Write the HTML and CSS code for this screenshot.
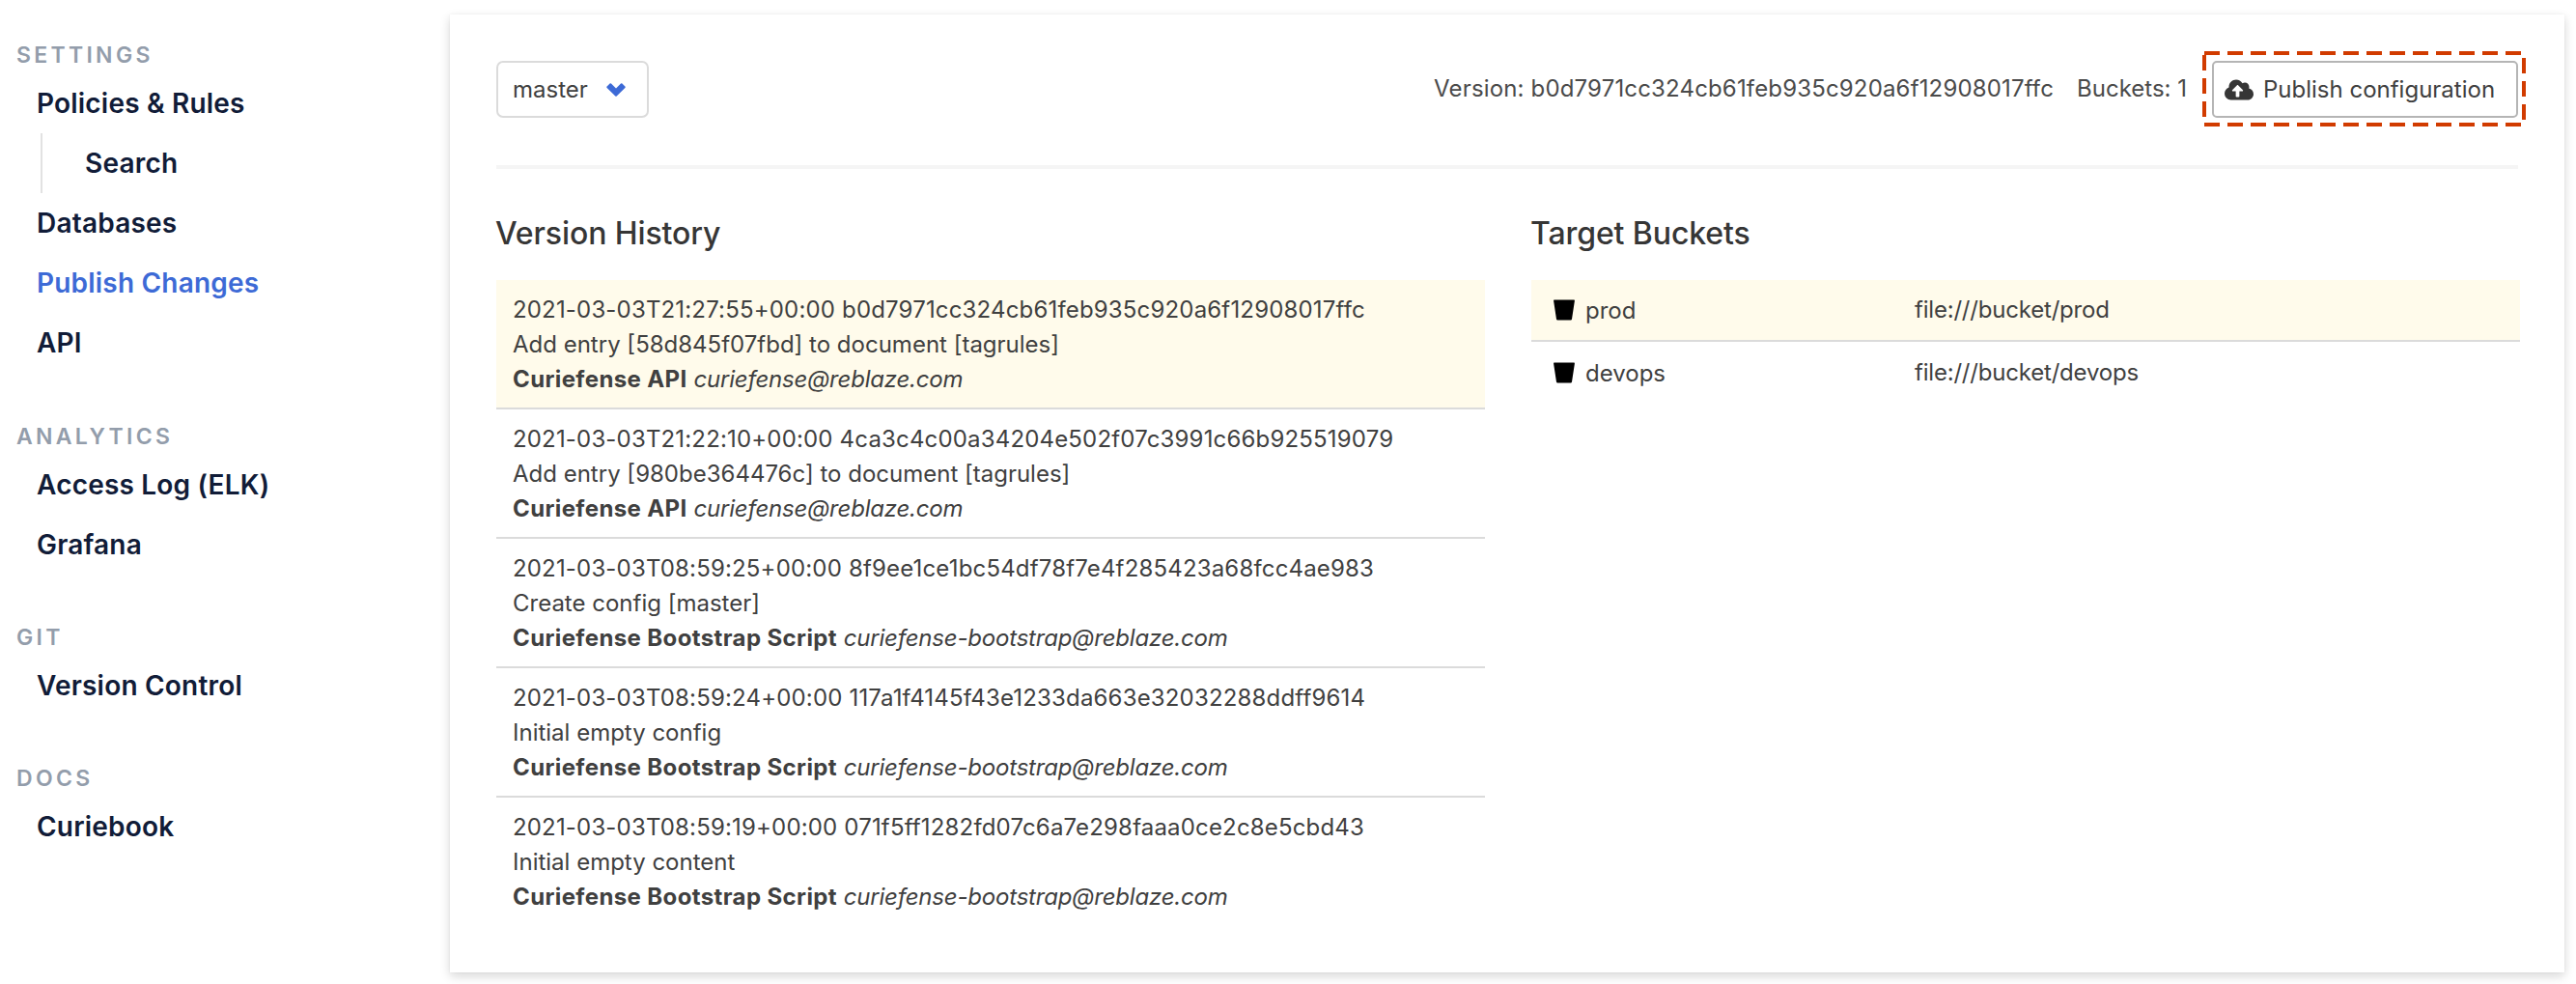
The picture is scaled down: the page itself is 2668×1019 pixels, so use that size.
FILE: index.html
```html
<!DOCTYPE html>
<html lang="en">
<head>
    <meta charset="UTF-8">
    <title>Publish Changes</title>
    <link rel="stylesheet" href="styles.css">
</head>
<body>

    <aside class="sidebar">
        <p class="menu-label">Settings</p>
        <ul class="menu-list">
            <li><a>Policies &amp; Rules</a></li>
            <li class="sub-item"><a>Search</a></li>
            <li><a>Databases</a></li>
            <li><a class="is-active">Publish Changes</a></li>
            <li><a>API</a></li>
        </ul>
        <p class="menu-label">Analytics</p>
        <ul class="menu-list">
            <li><a>Access Log (ELK)</a></li>
            <li><a>Grafana</a></li>
        </ul>
        <p class="menu-label">Git</p>
        <ul class="menu-list">
            <li><a>Version Control</a></li>
        </ul>
        <p class="menu-label">Docs</p>
        <ul class="menu-list">
            <li><a>Curiebook</a></li>
        </ul>
    </aside>

    <main class="card">
        <header class="toolbar">
            <div class="select-box">
                <span>master</span>
                <svg class="chevron" viewBox="0 0 20 14"><path d="M3.6.6a1 1 0 0 1 1.4 0L10 5.6l5-5a1 1 0 0 1 1.4 0l3 3a1 1 0 0 1 0 1.4l-8.7 8.4a1 1 0 0 1-1.4 0L.6 5a1 1 0 0 1 0-1.4z"/></svg>
            </div>
            <div class="toolbar-right">
                <span class="version">Version: b0d7971cc324cb61feb935c920a6f12908017ffc</span>
                <span class="buckets">Buckets: 1</span>
                <div class="publish-wrap">
                    <button class="publish-btn" type="button">
                        <svg class="cloud" viewBox="0 0 640 512"><path d="M537.6 226.6c4.1-10.7 6.4-22.4 6.4-34.6 0-53-43-96-96-96-19.7 0-38.1 6-53.3 16.2C367 64.2 315.3 32 256 32c-88.4 0-160 71.6-160 160 0 2.7.1 5.4.2 8.1C40.2 219.8 0 273.2 0 336c0 79.5 64.5 144 144 144h368c70.7 0 128-57.3 128-128 0-61.9-44-113.6-102.4-125.4zM393.4 288H328v112c0 8.8-7.2 16-16 16h-48c-8.8 0-16-7.2-16-16V288h-65.4c-14.3 0-21.4-17.2-11.3-27.3l105.4-105.4c6.2-6.2 16.4-6.2 22.6 0l105.4 105.4c10.1 10.1 2.9 27.3-11.3 27.3z"/></svg>
                        Publish configuration
                    </button>
                    <svg class="dash-frame" viewBox="0 0 335 78"><rect x="2" y="2" width="331" height="74"/></svg>
                </div>
            </div>
        </header>

        <div class="columns">
            <section>
                <h3>Version History</h3>
                <div class="commit is-current">
                    <div class="hash">2021-03-03T21:27:55+00:00 b0d7971cc324cb61feb935c920a6f12908017ffc</div>
                    <div>Add entry [58d845f07fbd] to document [tagrules]</div>
                    <div><strong>Curiefense API</strong> <em>curiefense@reblaze.com</em></div>
                </div>
                <div class="commit">
                    <div class="hash">2021-03-03T21:22:10+00:00 4ca3c4c00a34204e502f07c3991c66b925519079</div>
                    <div>Add entry [980be364476c] to document [tagrules]</div>
                    <div><strong>Curiefense API</strong> <em>curiefense@reblaze.com</em></div>
                </div>
                <div class="commit">
                    <div class="hash">2021-03-03T08:59:25+00:00 8f9ee1ce1bc54df78f7e4f285423a68fcc4ae983</div>
                    <div>Create config [master]</div>
                    <div><strong>Curiefense Bootstrap Script</strong> <em>curiefense-bootstrap@reblaze.com</em></div>
                </div>
                <div class="commit">
                    <div class="hash">2021-03-03T08:59:24+00:00 117a1f4145f43e1233da663e32032288ddff9614</div>
                    <div>Initial empty config</div>
                    <div><strong>Curiefense Bootstrap Script</strong> <em>curiefense-bootstrap@reblaze.com</em></div>
                </div>
                <div class="commit is-last">
                    <div class="hash">2021-03-03T08:59:19+00:00 071f5ff1282fd07c6a7e298faaa0ce2c8e5cbd43</div>
                    <div>Initial empty content</div>
                    <div><strong>Curiefense Bootstrap Script</strong> <em>curiefense-bootstrap@reblaze.com</em></div>
                </div>
            </section>

            <section>
                <h3>Target Buckets</h3>
                <div class="bucket is-current">
                    <div class="bucket-name">
                        <svg class="bucket-icon" viewBox="0 0 22 22"><path d="M1 0.5h20c.6 0 1 .5.9 1.1L19 20.6c-.1.6-.6.9-1.1.9H4.1c-.5 0-1-.3-1.1-.9L.1 1.6C0 1 .4.5 1 .5z"/></svg>
                        <span>prod</span>
                    </div>
                    <div class="bucket-url">file:///bucket/prod</div>
                </div>
                <div class="bucket">
                    <div class="bucket-name">
                        <svg class="bucket-icon" viewBox="0 0 22 22"><path d="M1 0.5h20c.6 0 1 .5.9 1.1L19 20.6c-.1.6-.6.9-1.1.9H4.1c-.5 0-1-.3-1.1-.9L.1 1.6C0 1 .4.5 1 .5z"/></svg>
                        <span>devops</span>
                    </div>
                    <div class="bucket-url">file:///bucket/devops</div>
                </div>
            </section>
        </div>
    </main>

</body>
</html>
```

FILE: styles.css
```css
* {
    box-sizing: border-box;
}
body {
    font-family: Inter, "Liberation Sans", sans-serif;
    font-size: 24px;
    color: #404040;
    background: #fff;
    margin: 0;
    min-height: 100vh;
    display: flex;
    align-items: flex-start;
}
.sidebar {
    width: 466px;
    flex-shrink: 0;
    padding-top: 39px;
}
.menu-label {
    margin: 0 0 1px 17px;
    height: 36px;
    line-height: 36px;
    font-size: 23px;
    font-weight: 600;
    letter-spacing: 3.3px;
    text-transform: uppercase;
    color: #939dab;
}
.menu-list {
    list-style: none;
    margin: 0 0 47px 0;
    padding: 0;
}
.menu-list:nth-of-type(1) {
    margin-bottom: 48px;
}
.menu-list li {
    height: 62px;
    line-height: 62px;
    padding-left: 38px;
    font-size: 28px;
    font-weight: 600;
    letter-spacing: 0.2px;
    color: #111c38;
}
.menu-list .sub-item {
    margin-left: 42px;
    padding-left: 44px;
    border-left: 2px solid #e2e2e2;
}
.is-active {
    color: #3d6ad6;
}
.card {
    width: 2190px;
    height: 992px;
    margin-top: 15px;
    padding: 48px 48px 0 48px;
    background: #fff;
    box-shadow: 0 4px 10px rgba(10, 10, 10, 0.16), 0 0 2px rgba(10, 10, 10, 0.06);
}
.toolbar {
    display: flex;
    justify-content: space-between;
    align-items: center;
    height: 59px;
    margin-bottom: 49px;
    position: relative;
}
.toolbar::after {
    content: "";
    position: absolute;
    left: 0;
    right: 0;
    bottom: -53px;
    height: 4px;
    background: #f5f5f5;
}
.select-box {
    width: 158px;
    height: 59px;
    display: flex;
    align-items: center;
    justify-content: space-between;
    padding: 0 22px 0 15px;
    border: 2px solid #dbdbdb;
    border-radius: 7px;
}
.chevron {
    width: 20px;
    height: 14px;
    fill: #3d6ad6;
}
.toolbar-right {
    display: flex;
    align-items: center;
    color: #4a4a4a;
}
.version {
    margin-top: -3px;
    letter-spacing: 0.16px;
}
.buckets {
    margin: -3px 0 0 24px;
}
.publish-wrap {
    position: relative;
    margin-left: 26px;
}
.publish-btn {
    width: 317px;
    height: 59px;
    display: flex;
    align-items: center;
    gap: 10px;
    font: inherit;
    color: #404040;
    background: #fff;
    border: 2px solid #b5b5b5;
    border-radius: 5px;
    padding: 0 0 0 11px;
}
.cloud {
    width: 30px;
    height: 24px;
    fill: #363636;
}
.dash-frame {
    position: absolute;
    left: -10px;
    top: -10px;
    width: 335px;
    height: 78px;
    fill: none;
    stroke: #d13b00;
    stroke-width: 4;
    stroke-dasharray: 16 8;
    overflow: visible;
}
.columns {
    display: grid;
    grid-template-columns: 1024px 1024px;
    column-gap: 48px;
}
h3 {
    margin: 50px 0 27px -1px;
    height: 42px;
    line-height: 42px;
    font-size: 32px;
    font-weight: 500;
    letter-spacing: -0.1px;
    color: #363636;
}
.commit {
    padding: 13px 17px 11px;
    border-bottom: 2px solid #dbdbdb;
    line-height: 36px;
    height: 134px;
}
.commit.is-last {
    border-bottom: none;
}
.hash {
    letter-spacing: 0.17px;
}
.is-current {
    background: #fffbeb;
}
.commit strong {
    font-weight: 700;
    letter-spacing: 0.38px;
}
.commit em {
    letter-spacing: -0.2px;
}
.bucket {
    display: flex;
    height: 64px;
    align-items: center;
    padding-left: 23px;
}
.bucket.is-current {
    border-bottom: 2px solid #dbdbdb;
}
.bucket-name {
    display: flex;
    align-items: center;
    gap: 11px;
    width: 374px;
}
.bucket-icon {
    width: 22px;
    height: 22px;
    fill: #000;
}
.bucket-url {
    margin-top: -2px;
    letter-spacing: -0.2px;
}
```
